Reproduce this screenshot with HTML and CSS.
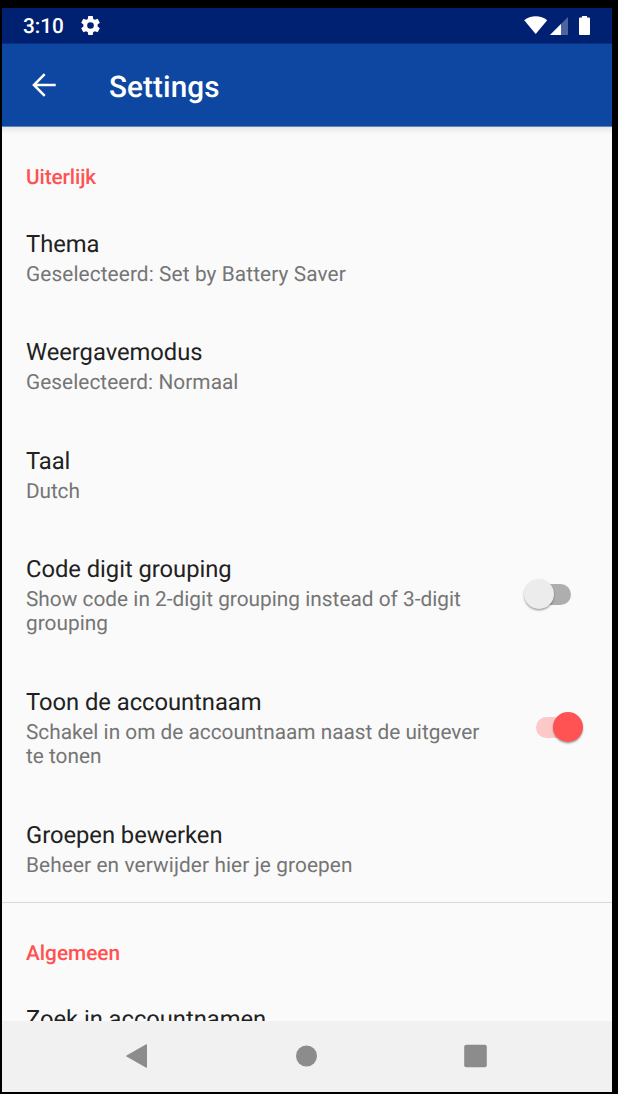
FILE: index.html
```html
<!DOCTYPE html>
<html lang="nl">
<head>
<meta charset="utf-8">
<title>Settings</title>
<link rel="stylesheet" href="styles.css">
</head>
<body>
<div class="screen">
  <div class="status">
    <span class="clock">3:10</span>
    <svg class="gear" viewBox="2 2 20 20"><path fill="#fff" d="M19.43 12.98c.04-.32.07-.64.07-.98s-.03-.66-.07-.98l2.11-1.65c.19-.15.24-.42.12-.64l-2-3.46c-.12-.22-.39-.3-.61-.22l-2.49 1c-.52-.4-1.08-.73-1.69-.98l-.38-2.65C14.46 2.18 14.25 2 14 2h-4c-.25 0-.46.18-.49.42l-.38 2.65c-.61.25-1.17.59-1.69.98l-2.49-1c-.23-.09-.49 0-.61.22l-2 3.46c-.13.22-.07.49.12.64l2.11 1.65c-.04.32-.07.65-.07.98s.03.66.07.98l-2.11 1.65c-.19.15-.24.42-.12.64l2 3.46c.12.22.39.3.61.22l2.49-1c.52.4 1.08.73 1.69.98l.38 2.65c.03.24.24.42.49.42h4c.25 0 .46-.18.49-.42l.38-2.65c.61-.25 1.17-.59 1.69-.98l2.49 1c.23.09.49 0 .61-.22l2-3.46c.12-.22.07-.49-.12-.64l-2.11-1.65zM12 15.5a3.5 3.5 0 1 1 0-7 3.5 3.5 0 0 1 0 7z"/></svg>
    <svg class="signals" viewBox="0 0 68 20"><path fill="#fff" d="M.2 4.2C6.500-1 17-1 23.200 4.200L11.700 18z"/><path fill="#fff" fill-opacity=".3" d="M44 1V19H26z"/><path fill="#fff" d="M37 8V19H26z"/><path fill="#fff" d="M58 0h5v1.500h2q1 0 1 1V18q0 1-1 1h-9q-1 0-1-1V2.500q0-1 1-1h2z"/></svg>
  </div>
  <header class="toolbar">
    <svg class="back" viewBox="0 0 24 24"><path fill="none" stroke="#fff" stroke-width="2.500" d="M23.700 12H2M12.700 1.200L1.900 12l10.800 10.800"/></svg>
    <h1 class="heading">Settings</h1>
  </header>
  <main class="list">
    <h2 class="category tight">Uiterlijk</h2>
    <div class="item"><div class="copy"><div class="title">Thema</div><div class="summary wide">Geselecteerd: Set by Battery Saver</div></div></div>
    <div class="item"><div class="copy"><div class="title">Weergavemodus</div><div class="summary loose">Geselecteerd: Normaal</div></div></div>
    <div class="item"><div class="copy"><div class="title">Taal</div><div class="summary tight">Dutch</div></div></div>
    <div class="item"><div class="copy"><div class="title">Code digit grouping</div><div class="summary grouping">Show code in 2-digit grouping instead of 3-digit<br>grouping</div></div><div class="switch"><span class="thumb"></span></div></div>
    <div class="item"><div class="copy"><div class="title">Toon de accountnaam</div><div class="summary">Schakel in om de accountnaam naast de uitgever<br>te tonen</div></div><div class="switch on"><span class="thumb"></span></div></div>
    <div class="item"><div class="copy"><div class="title">Groepen bewerken</div><div class="summary wide">Beheer en verwijder hier je groepen</div></div></div>
    <h2 class="category divided">Algemeen</h2>
    <div class="item"><div class="copy"><div class="title">Zoek in accountnamen</div></div></div>
  </main>
  <nav class="navbar">
    <svg class="navicon" viewBox="0 0 24 24"><path fill="#8c8c8c" d="M21.200.3q.8-.4.800.500V23.200q0 .9-.8.500L1.500 12.600q-.9-.6 0-1.200z"/></svg>
    <svg class="navicon" viewBox="0 0 24 24"><circle cx="12.500" cy="12" r="10.500" fill="#8c8c8c"/></svg>
    <svg class="navicon" viewBox="0 0 24 24"><rect x=".2" y=".7" width="22.600" height="22.600" rx="2" fill="#8c8c8c"/></svg>
  </nav>
</div>
</body>
</html>
```
FILE: styles.css
```css
* { box-sizing: border-box; }
body {
  margin: 0;
  height: 1094px;
  padding: 8px 6px 2px 2px;
  background: #000;
  font-family: Roboto, "Liberation Sans", sans-serif;
  text-rendering: geometricPrecision;
  overflow: hidden;
}
.screen {
  height: 1084px;
  display: flex;
  flex-direction: column;
  background: #fafafa;
}
.status {
  flex: none;
  height: 35px;
  padding: 0 20px 0 21px;
  display: flex;
  align-items: center;
  background: #002171;
  color: #fff;
}
.clock { font-size: 20.8px; font-weight: 500; line-height: 24px; padding-top: 2.6px; }
.gear { width: 19px; height: 19px; margin-left: 17px; }
.signals { width: 68px; height: 20px; margin-left: auto; }
.toolbar {
  flex: none;
  height: 84px;
  padding-left: 29.5px;
  display: flex;
  align-items: center;
  background: #0d47a1;
  border-top: 1px solid #07317f;
  border-bottom: 1px solid #6483bd;
  color: #fff;
}
.back { width: 24px; height: 24px; }
.heading { margin: 5px 0 0 53.5px; font-size: 29.7px; font-weight: 500; line-height: 36px; letter-spacing: .1px; }
.list {
  flex: 1;
  min-height: 0;
  overflow: hidden;
  background: linear-gradient(#e7e7e7, #fafafa 7px);
}
.category {
  margin: 0;
  height: 76.8px;
  padding: 39.3px 24px 0;
  color: #ff5252;
  font-size: 20.8px;
  font-weight: 500;
  line-height: 24.4px;
}
.divided { height: 77px; margin-top: -.8px; padding-top: 39px; border-top: 1px solid #d8d8d8; }
.item {
  padding: 26.2px 24px 25px;
  display: flex;
  align-items: center;
  justify-content: space-between;
}
.copy { white-space: nowrap; }
.title { color: #212121; font-size: 23.75px; line-height: 28px; padding-bottom: 4.8px; letter-spacing: -.03px; }
.summary { color: #757575; font-size: 20.8px; line-height: 24.4px; }
.wide { letter-spacing: .11px; }
.loose { letter-spacing: .06px; }
.grouping { letter-spacing: .02px; }
.tight { letter-spacing: -.1px; }
.switch {
  width: 35px;
  height: 21px;
  margin: 0 17px 3.4px 0;
  border-radius: 11px;
  background: #aeaeae;
  display: flex;
  align-items: center;
}
.thumb {
  flex: none;
  width: 30px;
  height: 30px;
  margin-left: -12px;
  border-radius: 50%;
  background: #ececec;
  box-shadow: 0 1.5px 2px rgba(0, 0, 0, .35);
}
.on { background: #fcc8c8; }
.on .thumb { margin-left: 17px; background: #ff5252; }
.navbar {
  flex: none;
  height: 71px;
  padding: 0 124.5px 0.6px 122.5px;
  display: flex;
  align-items: center;
  justify-content: space-between;
  background: #f1f1f1;
}
.navicon { width: 24px; height: 24px; }
```
